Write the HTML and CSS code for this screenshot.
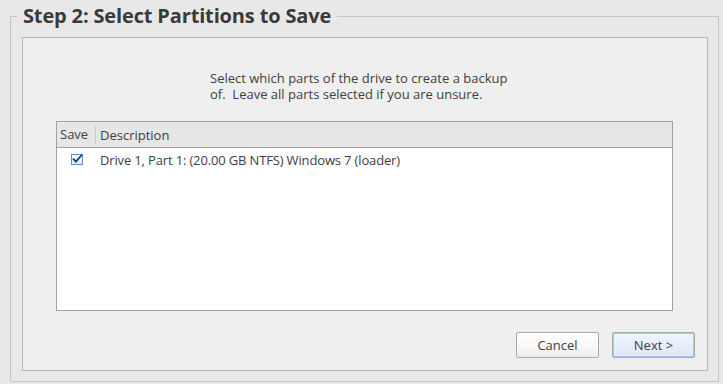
FILE: index.html
```html
<!DOCTYPE html>
<html>
<head>
<meta charset="utf-8">
<link rel="stylesheet" href="styles.css">
</head>
<body>
<fieldset class="group">
  <legend class="group-title">Step 2: Select Partitions to Save</legend>
  <div class="panel">
    <div class="intro-wrap">
      <p class="intro">Select which parts of the drive to create a backup<br>of.&nbsp; Leave all parts selected if you are unsure.</p>
    </div>
    <div class="table">
      <div class="thead">
        <div class="th th-save">Save</div>
        <div class="th th-desc">Description</div>
      </div>
      <div class="tbody">
        <div class="tr">
          <div class="td td-save">
            <svg class="check" width="12" height="11" viewBox="0 0 12 11">
              <defs>
                <linearGradient id="cbg" x1="0" y1="0" x2="0" y2="1">
                  <stop offset="0" stop-color="#ffffff"/>
                  <stop offset="1" stop-color="#dfe9f7"/>
                </linearGradient>
              </defs>
              <rect x="0.5" y="0.5" width="11" height="10" fill="url(#cbg)" stroke="#5f8fd8"/>
              <path d="M2.6 5.2 L4.9 7.6 L10.4 1.4" fill="none" stroke="#243f6e" stroke-width="1.8" stroke-linecap="square"/>
            </svg>
          </div>
          <div class="td td-desc">Drive 1, Part 1: (20.00 GB NTFS) Windows 7 (loader)</div>
        </div>
      </div>
    </div>
    <div class="actions">
      <button class="btn">Cancel</button>
      <button class="btn btn-default">Next &gt;</button>
    </div>
  </div>
</fieldset>
</body>
</html>
```
FILE: styles.css
```css
html, body {
  margin: 0;
  padding: 0;
  background: #e8e8e8;
}
body {
  font-family: "Open Sans", "DejaVu Sans", sans-serif;
  font-size: 13px;
  color: #404040;
  padding-top: 5px;
}
.group {
  box-sizing: border-box;
  width: 709px;
  margin: 0 0 0 10px;
  padding: 10px 10px 10px 11px;
  border: 1px solid #c4c4c4;
  min-inline-size: 0;
}
.group-title {
  margin-left: -5px;
  padding: 0 6px;
  font-size: 20px;
  line-height: 22px;
  letter-spacing: -0.15px;
  font-weight: bold;
  color: #3a3a3a;
}
.panel {
  box-sizing: border-box;
  width: 686px;
  height: 334px;
  border: 1px solid #b5b5b5;
  background: #efefef;
  display: flex;
  flex-direction: column;
}
.intro-wrap {
  margin-top: 32px;
  height: 32px;
  display: flex;
  justify-content: center;
}
.intro {
  margin: 0;
  width: 310px;
  line-height: 16px;
  text-align: left;
}
.table {
  box-sizing: border-box;
  margin: 19px 34px 0 33px;
  height: 190px;
  border: 1px solid #a2a2a2;
  background: #ffffff;
  display: flex;
  flex-direction: column;
}
.thead {
  display: flex;
  height: 25px;
  background: #e6e6e6;
  border-bottom: 1px solid #a2a2a2;
  align-items: center;
}
.th {
  line-height: 16px;
}
.th-save {
  box-sizing: border-box;
  width: 39px;
  padding-left: 3px;
  border-right: 1px solid #c8c8c8;
  height: 18px;
}
.th-desc {
  padding-left: 4px;
}
.tr {
  display: flex;
  padding-top: 4px;
  line-height: 16px;
}
.td-save {
  width: 39px;
  display: flex;
  justify-content: center;
  padding-top: 2px;
  padding-left: 1px;
  box-sizing: border-box;
}
.check {
  display: block;
}
.td-desc {
  padding-left: 4px;
  letter-spacing: -0.15px;
}
.actions {
  margin-top: 21px;
  display: flex;
  justify-content: flex-end;
  gap: 13px;
  padding-right: 12px;
}
.btn {
  box-sizing: border-box;
  width: 83px;
  height: 26px;
  border: 1px solid #a9a9a9;
  border-radius: 2px;
  background: linear-gradient(#ffffff 0%, #f8f8f8 55%, #ececec 100%);
  font-family: "Open Sans", "DejaVu Sans", sans-serif;
  font-size: 13px;
  color: #404040;
  padding: 0;
}
.btn-default {
  box-shadow: inset 0 0 0 1px #a9c9f2;
  background: linear-gradient(#eef4fd 0%, #e6eefa 55%, #dce6f3 100%);
}
```
